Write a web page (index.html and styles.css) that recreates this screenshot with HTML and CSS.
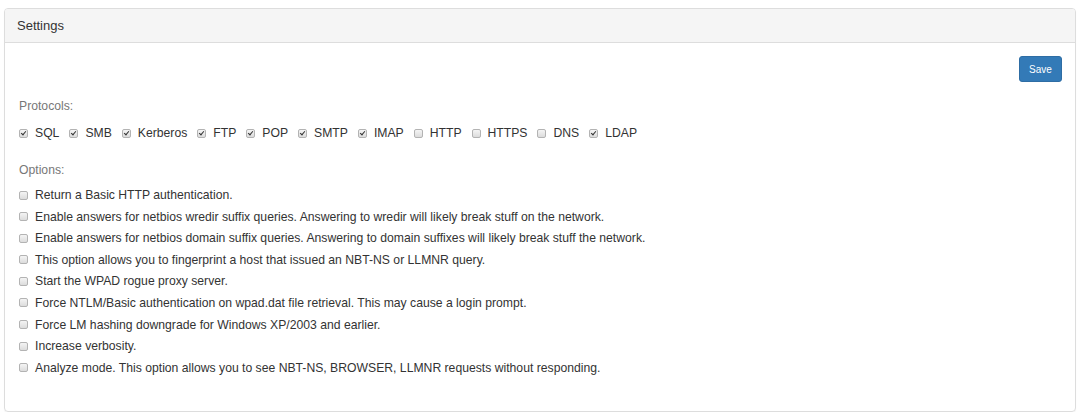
FILE: index.html
```html
<!DOCTYPE html>
<html>
<head>
<meta charset="utf-8">
<link rel="stylesheet" href="styles.css">
</head>
<body>
<div class="panel">
  <div class="panel-heading">Settings</div>
  <div class="panel-body">
    <div class="actions"><button class="btn">Save</button></div>
    <div class="group-label">Protocols:</div>
    <div class="protocols">
      <label class="cb"><span class="box on"></span>SQL</label>
      <label class="cb"><span class="box on"></span>SMB</label>
      <label class="cb"><span class="box on"></span>Kerberos</label>
      <label class="cb"><span class="box on"></span>FTP</label>
      <label class="cb"><span class="box on"></span>POP</label>
      <label class="cb"><span class="box on"></span>SMTP</label>
      <label class="cb"><span class="box on"></span>IMAP</label>
      <label class="cb"><span class="box"></span>HTTP</label>
      <label class="cb"><span class="box"></span>HTTPS</label>
      <label class="cb"><span class="box"></span>DNS</label>
      <label class="cb"><span class="box on"></span>LDAP</label>
    </div>
    <div class="group-label options-label">Options:</div>
    <div class="options">
      <label class="cb"><span class="box"></span>Return a Basic HTTP authentication.</label>
      <label class="cb"><span class="box"></span>Enable answers for netbios wredir suffix queries. Answering to wredir will likely break stuff on the network.</label>
      <label class="cb"><span class="box"></span>Enable answers for netbios domain suffix queries. Answering to domain suffixes will likely break stuff the network.</label>
      <label class="cb"><span class="box"></span>This option allows you to fingerprint a host that issued an NBT-NS or LLMNR query.</label>
      <label class="cb"><span class="box"></span>Start the WPAD rogue proxy server.</label>
      <label class="cb"><span class="box"></span>Force NTLM/Basic authentication on wpad.dat file retrieval. This may cause a login prompt.</label>
      <label class="cb"><span class="box"></span>Force LM hashing downgrade for Windows XP/2003 and earlier.</label>
      <label class="cb"><span class="box"></span>Increase verbosity.</label>
      <label class="cb"><span class="box"></span>Analyze mode. This option allows you to see NBT-NS, BROWSER, LLMNR requests without responding.</label>
    </div>
  </div>
</div>
</body>
</html>
```
FILE: styles.css
```css
html, body {
  margin: 0;
  padding: 0;
  background: #fff;
}
body {
  padding: 8px 4px 0 4px;
  font-family: "Liberation Sans", Arial, sans-serif;
  font-size: 12.2px;
  color: #333;
}
.panel {
  border: 1px solid #ddd;
  border-radius: 4px;
  box-shadow: 0 1px 1px rgba(0,0,0,0.05);
  height: 404px;
  box-sizing: border-box;
  overflow: hidden;
}
.panel-heading {
  background: #f5f5f5;
  border-bottom: 1px solid #ddd;
  height: 34px;
  box-sizing: border-box;
  padding: 0 12px;
  font-size: 13px;
  line-height: 33px;
  color: #333;
}
.panel-body {
  padding: 13px 13px 0 14px;
}
.actions {
  display: flex;
  justify-content: flex-end;
}
.btn {
  background: #337ab7;
  border: 1px solid #2e6da4;
  color: #fff;
  font-family: "Liberation Sans", Arial, sans-serif;
  font-size: 10px;
  border-radius: 3px;
  width: 43px;
  height: 26px;
  padding: 0;
}
.group-label {
  color: #777;
  margin-top: 17px;
  line-height: 14px;
}
.options-label {
  margin-top: 23px;
}
.protocols {
  display: flex;
  margin-top: 13px;
  gap: 10px;
}
.cb {
  display: flex;
  align-items: center;
  gap: 7px;
  line-height: 14px;
  white-space: nowrap;
}
.options {
  margin-top: 11px;
  display: flex;
  flex-direction: column;
  gap: 7.6px;
}
.box {
  width: 7px;
  height: 7px;
  border: 1px solid #b3b3b3;
  border-radius: 2px;
  background: linear-gradient(#f4f4f4, #dcdcdc);
  position: relative;
  flex: none;
}
.box.on::after {
  content: "";
  position: absolute;
  left: 2px;
  top: 0;
  width: 2px;
  height: 4px;
  border: solid #333;
  border-width: 0 1.5px 1.5px 0;
  transform: rotate(40deg);
}
```
